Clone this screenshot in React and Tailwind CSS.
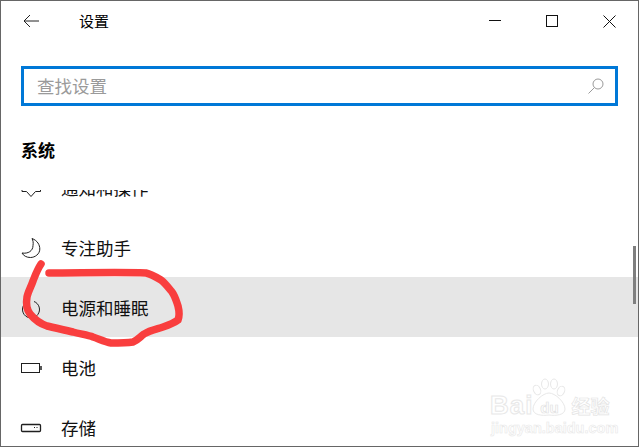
import React from "react";

const rows = [
  { label: "通知和操作", icon: "notify" },
  { label: "专注助手", icon: "moon" },
  { label: "电源和睡眠", icon: "power", active: true },
  { label: "电池", icon: "battery" },
  { label: "存储", icon: "storage" },
];

const RowIcon = ({ name }) => {
  return (
    <svg width="20" height="20" viewBox="0 0 20 20" fill="none" stroke="#1f1f1f" strokeWidth="1" className="shrink-0 overflow-visible">
      {name === "notify" && <path d="M1 12.500V14.500H5.500L10 19.500L14.500 14.500H19.500V12.500" />}
      {name === "moon" && (
        <path d="M11 1.500C16.500 3.500 18.800 8 18.800 12C18.800 17 14 20.500 9.500 20.500C5.500 20.500 2.500 18.800 1 16C7 17 12 14 12 8.500C12.500 5.500 12 3.500 11 1.500Z" />
      )}
      {name === "power" && <path d="M13 4.500A8.500 8.500 0 1 1 7 4.500" />}
      {name === "battery" && (
        <>
          <rect x="0.500" y="6.500" width="18" height="9" />
          <path d="M20 9V13" strokeWidth="1.500" />
        </>
      )}
      {name === "storage" && (
        <>
          <rect x="0.500" y="7.500" width="19" height="7" rx="1" strokeWidth="1.300" />
          <path d="M13 10.500H14M15.500 10.500H16.500" />
        </>
      )}
    </svg>
  );
};

const Watermark = () => {
  return (
    <div className="absolute left-[489px] top-[377px] w-[120px] flex flex-col font-['Liberation_Sans',sans-serif] pointer-events-none">
      <div className="flex items-end h-[40px]">
        <span className="text-[26px] leading-[25px] font-bold text-white [-webkit-text-stroke:1px_#e8e8e8] tracking-[1px]">Bai</span>
        <div className="relative w-[32px] h-[40px] flex items-end justify-center">
          <svg width="40" height="40" viewBox="4 0 40 40" fill="white" stroke="#e8e8e8" strokeWidth="1" className="absolute left-[-4px] top-0">
            <ellipse cx="12" cy="12" rx="3.500" ry="5" transform="rotate(-25 12 12)" />
            <ellipse cx="20" cy="6" rx="3.500" ry="5" />
            <ellipse cx="29" cy="6" rx="3.500" ry="5" />
            <ellipse cx="36" cy="13" rx="3.500" ry="5" transform="rotate(25 36 13)" />
            <path d="M24 15C30 15 40 24 40 31C40 37 31 38 24 37C17 38 8 37 8 31C8 24 18 15 24 15Z" />
          </svg>
          <span className="relative text-[15px] leading-[20px] font-bold text-white [-webkit-text-stroke:0.700px_#e2e2e2]">du</span>
        </div>
        <span className="ml-[6px] text-[19px] leading-[24px] text-white font-['Noto_Sans_CJK_SC',sans-serif] font-bold [-webkit-text-stroke:0.700px_#e4e4e4]">经验</span>
      </div>
      <span className="mt-[2px] ml-[1px] text-[14.500px] leading-[16px] text-white font-bold [-webkit-text-stroke:0.600px_#e8e8e8] whitespace-nowrap">jingyan.baidu.com</span>
    </div>
  );
};

const App = () => {
  return (
    <div className="relative w-[639px] h-[447px] overflow-hidden bg-white border border-[#666666] text-black font-['Noto_Sans_CJK_SC',sans-serif]">
      {/* title bar */}
      <div className="flex items-center h-[40px] pl-[22px]">
        <svg width="16" height="14" viewBox="0 0 16 14" fill="none" stroke="#222" strokeWidth="1" className="shrink-0">
          <path d="M7 1L1 7L7 13M1 7H16" />
        </svg>
        <span className="ml-[40px] text-[15px] leading-[20px]">设置</span>
        <div className="ml-auto flex items-center pr-[22px] gap-[45px]">
          <svg width="12" height="12" viewBox="0 0 12 12" fill="none" stroke="#111" strokeWidth="1">
            <path d="M0 5.500H12" />
          </svg>
          <svg width="12" height="12" viewBox="0 0 12 12" fill="none" stroke="#111" strokeWidth="1">
            <rect x="0.500" y="0.500" width="11" height="11" />
          </svg>
          <svg width="13" height="13" viewBox="0 0 13 13" fill="none" stroke="#111" strokeWidth="1">
            <path d="M0.500 0.500L12.500 12.500M12.500 0.500L0.500 12.500" />
          </svg>
        </div>
      </div>

      {/* search */}
      <div className="mt-[25px] ml-[20px] w-[597px] h-[40px] border-[3px] border-[#0078d7] flex items-center pl-[13px] pr-[11px]">
        <span className="text-[17.500px] leading-[24px] text-[#9a9a9a]">查找设置</span>
        <svg width="16" height="16" viewBox="0 0 16 16" fill="none" stroke="#9a9a9a" strokeWidth="1" className="ml-auto">
          <circle cx="10" cy="6" r="5" />
          <path d="M6.500 9.500L0.500 15.500" />
        </svg>
      </div>

      <div className="mt-[32px] ml-[20px] text-[17px] leading-[24px] font-bold">系统</div>

      {/* list */}
      <div className="mt-[28px] h-[256px] overflow-hidden">
        <div className="-mt-[33px]">
          {rows.map((row) => (
            <div
              key={row.label}
              className={`flex items-center h-[60px] pl-[20px] gap-[20px] ${row.active ? "bg-[#e6e6e6]" : ""}`}
            >
              <RowIcon name={row.icon} />
              <span className="pt-[2px] text-[17.500px] leading-[24px] text-[#111]">{row.label}</span>
            </div>
          ))}
        </div>
      </div>

      {/* scrollbar thumb */}
      <div className="absolute left-[632px] top-[245px] w-[3px] h-[58px] bg-[#7f7f7f]" />

      <Watermark />

      {/* red pen mark */}
      <svg width="639" height="447" viewBox="0 0 639 447" fill="none" className="absolute left-[-1px] top-[-1px] pointer-events-none">
        <path
          d="M41 264C37 270 35 276 33 281C31 287 28 292 27 297C26 303 27 310 30 314C35 320 41 324 47 326C55 328 65 330 73 332C80 334 88 335 93 337C99 339 105 342 111 343C118 343 126 343 133 342C138 340 140 337 144 334C150 330 157 329 163 327C169 325 174 323 178 320C180 315 179 310 178 306C176 300 175 296 172 292C168 287 165 283 161 280C156 277 151 274 146 273C120 272 80 273 49 273"
          stroke="#f93e3e"
          strokeWidth="7.500"
          strokeLinecap="round"
          strokeLinejoin="round"
        />
      </svg>
    </div>
  );
};

export default App;
